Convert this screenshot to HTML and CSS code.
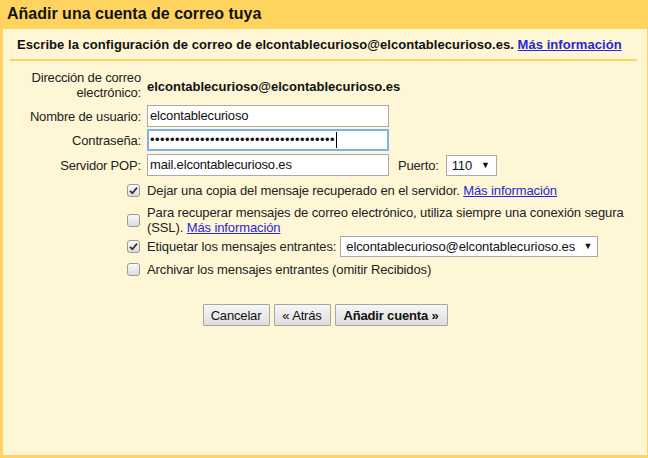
FILE: index.html
```html
<!DOCTYPE html>
<html lang="es">
<head>
<meta charset="utf-8">
<title>Añadir una cuenta de correo tuya</title>
<link rel="stylesheet" href="styles.css">
</head>
<body>
<div class="frame">
  <div class="header">Añadir una cuenta de correo tuya</div>
  <div class="panel">
    <div class="intro">Escribe la configuración de correo de elcontablecurioso@elcontablecurioso.es. <a href="#" class="link bold">Más información</a></div>
    <div class="form">
      <div class="label two">Dirección de correo<br>electrónico:</div>
      <div class="value">elcontablecurioso@elcontablecurioso.es</div>
      <div class="label">Nombre de usuario:</div>
      <div class="field"><div class="input">elcontablecurioso</div></div>
      <div class="label">Contraseña:</div>
      <div class="field"><div class="input focus"><span class="dots">•••••••••••••••••••••••••••••••••••••</span><span class="caret"></span></div></div>
      <div class="label pop">Servidor POP:</div>
      <div class="field pop">
        <div class="input">mail.elcontablecurioso.es</div>
        <span class="port-label">Puerto:</span>
        <div class="select port"><span>110</span><span class="arrow">▼</span></div>
      </div>
    </div>
    <div class="options">
      <div class="opt o1">
        <span class="cb checked"><svg viewBox="0 0 13 13" width="13" height="13"><path d="M3 6.8 L5.4 9.2 L10 3.6" fill="none" stroke="#333" stroke-width="1.8"/></svg></span>
        <span class="otext">Dejar una copia del mensaje recuperado en el servidor. <a href="#" class="link">Más información</a></span>
      </div>
      <div class="opt o2">
        <span class="cb"></span>
        <span class="otext">Para recuperar mensajes de correo electrónico, utiliza siempre una conexión segura<br>(SSL). <a href="#" class="link">Más información</a></span>
      </div>
      <div class="opt o3">
        <span class="cb checked"><svg viewBox="0 0 13 13" width="13" height="13"><path d="M3 6.8 L5.4 9.2 L10 3.6" fill="none" stroke="#333" stroke-width="1.8"/></svg></span>
        <span class="otext">Etiquetar los mensajes entrantes:</span>
        <div class="select label-sel"><span>elcontablecurioso@elcontablecurioso.es</span><span class="arrow">▼</span></div>
      </div>
      <div class="opt o4">
        <span class="cb"></span>
        <span class="otext">Archivar los mensajes entrantes (omitir Recibidos)</span>
      </div>
    </div>
    <div class="buttons">
      <button class="btn w1">Cancelar</button>
      <button class="btn w2">« Atrás</button>
      <button class="btn w3 bold">Añadir cuenta »</button>
    </div>
  </div>
</div>
</body>
</html>
```
FILE: styles.css
```css
html, body {
  margin: 0;
  padding: 0;
}
body {
  font-family: "Liberation Sans", Arial, sans-serif;
  font-size: 13px;
  color: #222;
  letter-spacing: -0.17px;
}
.frame {
  width: 648px;
  height: 458px;
  background: #ffd45e;
  display: flex;
  flex-direction: column;
  box-sizing: border-box;
}
.header {
  height: 29px;
  line-height: 28px;
  padding-left: 7px;
  font-weight: bold;
  font-size: 16px;
  color: #111;
  letter-spacing: 0;
}
.panel {
  flex: 1;
  margin: 0 1px 3px 3px;
  background: #fff6d6;
  display: flex;
  flex-direction: column;
}
.intro {
  margin: 0 10px 0 7px;
  padding: 8px 0 7px 7px;
  border-bottom: 2px solid #ffd45e;
  font-weight: bold;
  color: #111;
  line-height: 15px;
  letter-spacing: 0.05px;
}
.bold { font-weight: bold; }
.link {
  color: #2626d9;
  text-decoration: underline;
}
.form {
  display: grid;
  grid-template-columns: 138px auto;
  column-gap: 6px;
  row-gap: 2px;
  margin-top: 9px;
  align-items: center;
}
.label {
  text-align: right;
  line-height: 15px;
}
.label.two { padding-bottom: 3px; }
.pop { margin-top: 1px; }
.value {
  font-weight: bold;
  color: #111;
  letter-spacing: 0;
}
.field {
  display: flex;
  align-items: center;
}
.input {
  width: 242px;
  height: 22px;
  box-sizing: border-box;
  border: 1px solid #aaa;
  background: #fff;
  padding: 0 2px;
  line-height: 20px;
  color: #111;
  display: flex;
  align-items: center;
}
.input.focus {
  border: 2px solid #7fb0ea;
  padding: 0 1px;
}
.dots {
  letter-spacing: 0.45px;
  font-size: 13px;
  color: #111;
}
.caret {
  display: inline-block;
  width: 1px;
  height: 16px;
  background: #000;
  margin-left: 1px;
}
.port-label {
  margin-left: 9px;
  margin-right: 7px;
}
.select {
  height: 21px;
  box-sizing: border-box;
  border: 1px solid #aaa;
  background: #fff;
  display: flex;
  align-items: center;
  justify-content: space-between;
  padding: 0 6px 0 5px;
  color: #111;
}
.select .arrow {
  font-size: 9px;
  color: #111;
}
.port { width: 51px; }
.label-sel {
  width: 258px;
  margin-left: 4px;
  padding-left: 5px;
  padding-right: 5px;
}
.options {
  padding-left: 124px;
  display: flex;
  flex-direction: column;
  letter-spacing: -0.11px;
}
.opt {
  display: flex;
  align-items: center;
  line-height: 15px;
}
.o1 { margin-top: 7px; }
.o2 { margin-top: 7px; }
.o3 { margin-top: 1px; }
.o4 { margin-top: 5px; }
.otext { margin-left: 7px; color: #222; }
.cb {
  width: 13px;
  height: 13px;
  box-sizing: border-box;
  border: 1px solid #9a9a9a;
  border-radius: 3px;
  background: linear-gradient(#fafafa, #dcdcdc);
  display: inline-block;
  flex: none;
  position: relative;
}
.cb svg {
  position: absolute;
  left: -1px;
  top: -1px;
}
.buttons {
  display: flex;
  justify-content: center;
  gap: 4px;
  margin-top: 27px;
}
.btn {
  font-family: "Liberation Sans", Arial, sans-serif;
  font-size: 13px;
  letter-spacing: -0.17px;
  height: 22px;
  border: 1px solid #a6a6a6;
  background: linear-gradient(#f6f6f6, #dedede);
  color: #111;
  padding: 0;
  border-radius: 1px;
}
.w1 { width: 67px; }
.w2 { width: 57px; }
.w3 { width: 113px; }
```
